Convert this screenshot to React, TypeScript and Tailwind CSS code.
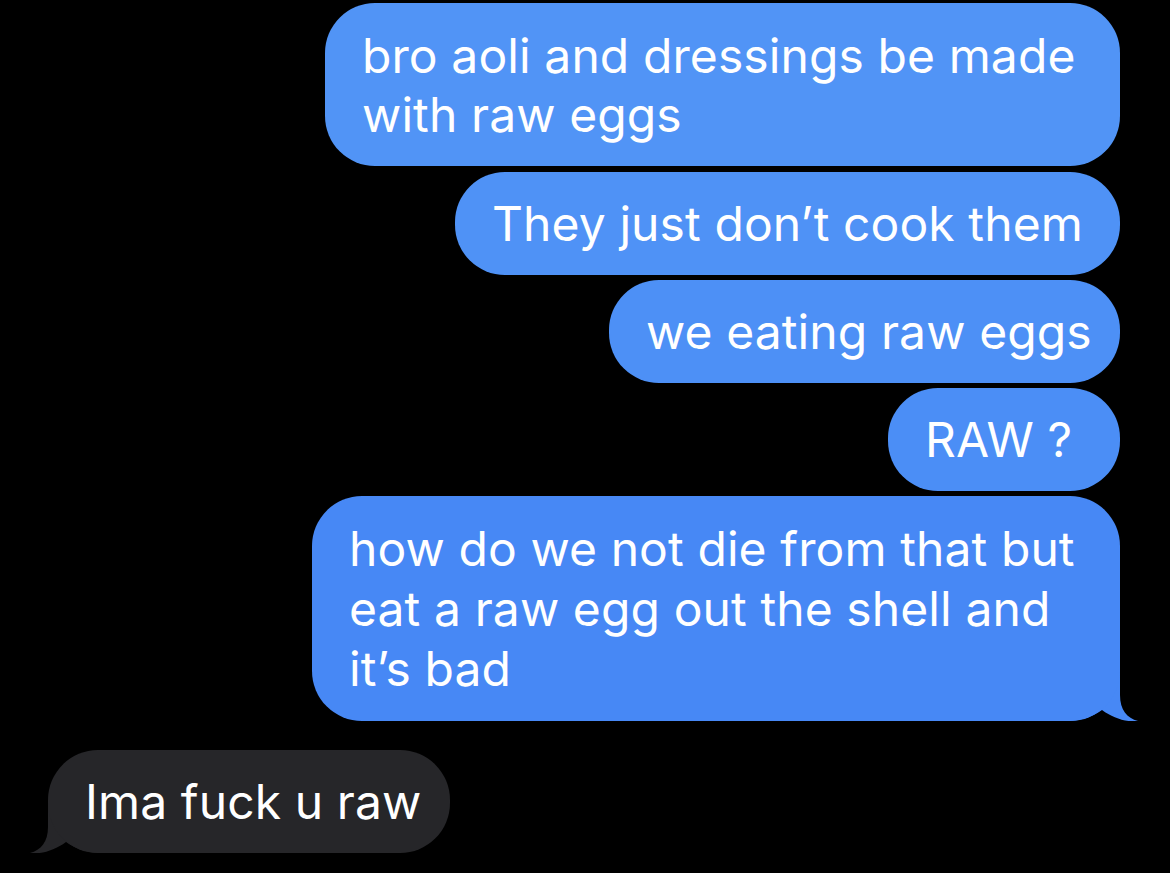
const font = { fontFamily: "Inter, 'Noto Sans', sans-serif" };

const Tail = ({ color, side }: { color: string; side: "right" | "left" }) =>
  side === "right" ? (
    <svg
      className="absolute bottom-0 right-[-18px]"
      width="78"
      height="50"
      viewBox="0 0 78 50"
    >
      <path
        d="M0 0 H60 V24 C60 39 67 47 78 50 C66 51.5 53 47 42 39 C32 46 20 50 8 50 H0 Z"
        fill={color}
      />
    </svg>
  ) : (
    <svg
      className="absolute bottom-0 left-[-18px]"
      width="78"
      height="50"
      viewBox="0 0 78 50"
    >
      <path
        d="M78 0 H18 V24 C18 39 11 47 0 50 C12 51.5 25 47 36 39 C46 46 58 50 70 50 H78 Z"
        fill={color}
      />
    </svg>
  );

const Bubble = ({
  lines,
  width,
  bg,
  leading,
  tail,
}: {
  lines: string[];
  width: string;
  bg: string;
  leading: string;
  tail?: "right" | "left";
}) => (
  <div className={`relative ${width}`}>
    <div
      className={`${bg} ${leading} relative z-10 rounded-[50px] py-[22.5px] pl-[37px] pr-[20px] text-[48px] text-white whitespace-nowrap tracking-[0.1px]`}
      style={font}
    >
      {lines.map((l, i) => (
        <div key={i}>{l}</div>
      ))}
    </div>
    {tail && (
      <Tail color={tail === "right" ? "#4788f5" : "#262629"} side={tail} />
    )}
  </div>
);

export default function App() {
  return (
    <div className="w-[1170px] h-[873px] bg-black overflow-hidden pt-[3px]">
      <div className="flex flex-col items-end gap-[5px] pr-[50px]">
        <Bubble
          lines={["bro aoli and dressings be made", "with raw eggs"]}
          width="w-[795px]"
          bg="bg-[#5194f6]"
          leading="leading-[59px]"
        />
        <Bubble
          lines={["They just don’t cook them"]}
          width="w-[665px] mt-[1px]"
          bg="bg-[#4f92f6]"
          leading="leading-[58px]"
        />
        <Bubble
          lines={["we eating raw eggs"]}
          width="w-[511px]"
          bg="bg-[#4d90f6]"
          leading="leading-[58px]"
        />
        <Bubble
          lines={["RAW ?"]}
          width="w-[232px]"
          bg="bg-[#4b8ef6]"
          leading="leading-[58px]"
        />
        <Bubble
          lines={[
            "how do we not die from that but",
            "eat a raw egg out the shell and",
            "it’s bad",
          ]}
          width="w-[808px]"
          bg="bg-[#4788f5]"
          leading="leading-[60px]"
          tail="right"
        />
      </div>
      <div className="mt-[29px] pl-[48px] flex">
        <Bubble
          lines={["Ima fuck u raw"]}
          width="w-[402px]"
          bg="bg-[#262629]"
          leading="leading-[58px]"
          tail="left"
        />
      </div>
    </div>
  );
}
